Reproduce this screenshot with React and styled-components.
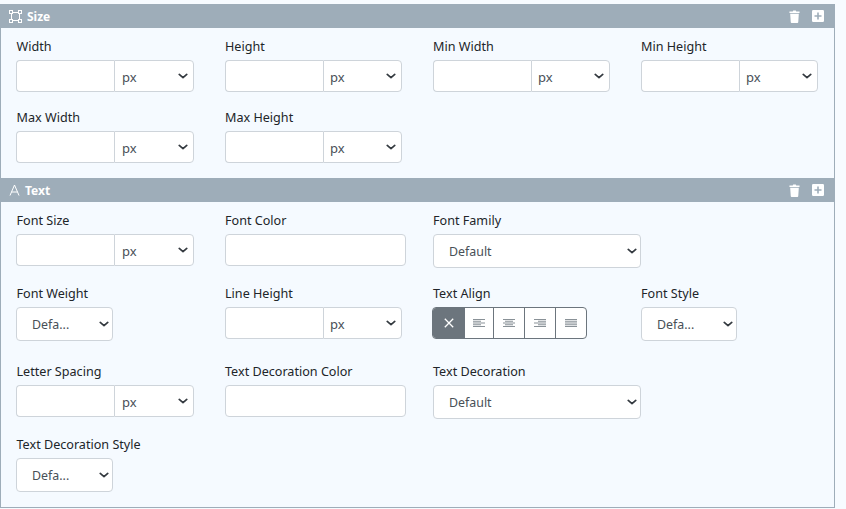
import React from "react";
import styled, { createGlobalStyle } from "styled-components";

const chevron =
	"data:image/svg+xml,%3csvg xmlns='http://www.w3.org/2000/svg' viewBox='0 0 16 16'%3e%3cpath fill='none' stroke='%23343a40' stroke-linecap='round' stroke-linejoin='round' stroke-width='2.8' d='M2 5.500l6 5 6-5'/%3e%3c/svg%3e";

const SizeIcon = () => (
	<svg width="13" height="13" viewBox="0 0 13 13" fill="none" stroke="#fff">
		<path d="M2.500 2.500h8v8h-8z" strokeWidth="1" />
		<g fill="#9eadb9" strokeWidth="1">
			<rect x="0.500" y="0.500" width="3" height="3" />
			<rect x="9.500" y="0.500" width="3" height="3" />
			<rect x="0.500" y="9.500" width="3" height="3" />
			<rect x="9.500" y="9.500" width="3" height="3" />
		</g>
	</svg>
);

const LetterIcon = () => (
	<svg width="11" height="12" viewBox="0 0 11 12" fill="none" stroke="#fff" strokeWidth="1">
		<path d="M1 11.500L5.500 1 10 11.500M2.600 8h5.800" />
	</svg>
);

const TrashIcon = () => (
	<svg width="11" height="13" viewBox="0 0 12 13" fill="#fff" preserveAspectRatio="none">
		<path d="M0.500 1.600h3.600L4.600 .6h2.800l.5 1h3.600v1.400H.5z" />
		<path d="M1.300 3.800h9.400l-.6 8.200c0 .5-.4 .9-.9 .9H2.800c-.5 0-.9-.4-.9-.9z" />
	</svg>
);

const PlusIcon = () => (
	<svg width="12" height="12" viewBox="0 0 12 12">
		<rect x="0" y="0" width="12" height="12" rx="1.200" fill="#fff" />
		<path d="M6 2.500v7M2.500 6h7" stroke="#9eadb9" strokeWidth="1.600" />
	</svg>
);

const AlignIcon = ({ rows }) => (
	<svg width="12" height="8" viewBox="0 0 12 8" stroke="#6c757d" strokeWidth="1" strokeOpacity="0.8">
		{rows.map(([x1, x2], i) => (
			<path key={i} d={`M${x1} ${0.5 + i * 1.75}H${x2}`} />
		))}
	</svg>
);

const CrossIcon = () => (
	<svg width="10" height="10" viewBox="0 0 10 10" stroke="#fff" strokeWidth="1.300">
		<path d="M.8 .8l8.400 8.400M9.200 .8L.8 9.200" />
	</svg>
);

const UnitField = ({ label }) => (
	<Field>
		<Label>{label}</Label>
		<UnitGroup>
			<UnitInput />
			<UnitSelect defaultValue="px">
				<option>px</option>
			</UnitSelect>
		</UnitGroup>
	</Field>
);

const TextField = ({ label }) => (
	<Field>
		<Label>{label}</Label>
		<WideInput />
	</Field>
);

const PickField = ({ label, width = 97, text }) => (
	<Field>
		<Label>{label}</Label>
		<Pick $width={width}>
			<option>{text}</option>
		</Pick>
	</Field>
);

const alignRows = {
	left: [[0, 12], [0, 8], [0, 12], [0, 8], [0, 12]],
	center: [[0, 12], [2, 10], [0, 12], [2, 10], [0, 12]],
	right: [[0, 12], [4, 12], [0, 12], [4, 12], [0, 12]],
	justify: [[0, 12], [0, 12], [0, 12], [0, 12], [0, 12]],
};

const App = () => {
	return (
		<Page>
			<GlobalStyle />
			<Panel>
				<Header>
					<Title>
						<SizeIcon />
						<span>Size</span>
					</Title>
					<Actions>
						<TrashIcon />
						<PlusIcon />
					</Actions>
				</Header>
				<Body>
					<Row $after={15}>
						<UnitField label="Width" />
						<UnitField label="Height" />
						<UnitField label="Min Width" />
						<UnitField label="Min Height" />
					</Row>
					<Row $after={15}>
						<UnitField label="Max Width" />
						<UnitField label="Max Height" />
					</Row>
				</Body>
				<Header>
					<Title>
						<LetterIcon />
						<span>Text</span>
					</Title>
					<Actions>
						<TrashIcon />
						<PlusIcon />
					</Actions>
				</Header>
				<Body>
					<Row $after={15}>
						<UnitField label="Font Size" />
						<TextField label="Font Color" />
						<PickField label="Font Family" width={208} text="Default" />
					</Row>
					<Row $after={20}>
						<PickField label="Font Weight" text="Defa..." />
						<UnitField label="Line Height" />
						<Field>
							<Label>Text Align</Label>
							<AlignGroup>
								<AlignButton $active $width={31}>
									<CrossIcon />
								</AlignButton>
								<AlignButton $width={29}>
									<AlignIcon rows={alignRows.left} />
								</AlignButton>
								<AlignButton $width={31}>
									<AlignIcon rows={alignRows.center} />
								</AlignButton>
								<AlignButton $width={31}>
									<AlignIcon rows={alignRows.right} />
								</AlignButton>
								<AlignButton $width={31}>
									<AlignIcon rows={alignRows.justify} />
								</AlignButton>
							</AlignGroup>
						</Field>
						<PickField label="Font Style" width={96} text="Defa..." />
					</Row>
					<Row $after={15}>
						<UnitField label="Letter Spacing" />
						<TextField label="Text Decoration Color" />
						<PickField label="Text Decoration" width={208} text="Default" />
					</Row>
					<Row $after={15}>
						<PickField label="Text Decoration Style" text="Defa..." />
					</Row>
				</Body>
			</Panel>
		</Page>
	);
};

export default App;

const GlobalStyle = createGlobalStyle`
	html, body {
		margin: 0;
		padding: 0;
		background-color: #f7fbff;
	}
	* {
		box-sizing: border-box;
	}
`;

const Page = styled.div`
	width: 846px;
	height: 509px;
	padding-top: 4px;
	overflow: hidden;
	font-family: "Noto Sans", sans-serif;
`;

const Panel = styled.div`
	width: 835px;
	border: 1px solid #9eadb9;
	border-top: none;
	background-color: #f5faff;
`;

const Header = styled.div`
	height: 24px;
	margin-left: -1px;
	margin-right: -1px;
	background-color: #9eadb9;
	display: flex;
	justify-content: space-between;
	align-items: center;
	padding: 0 11px 0 9px;
`;

const Title = styled.div`
	display: flex;
	align-items: center;
	gap: 5px;
	color: white;
	font-size: 12px;
	font-weight: 700;
`;

const Actions = styled.div`
	display: flex;
	align-items: center;
	gap: 12px;
`;

const Body = styled.div`
	padding: 8px 0 0 15px;
`;

const Row = styled.div`
	display: grid;
	grid-template-columns: 209px 208px 208px 208px;
	margin-bottom: ${(props) => props.$after}px;
`;

const Field = styled.div`
	display: flex;
	flex-direction: column;
	align-items: flex-start;
`;

const Label = styled.label`
	font-size: 12.600px;
	line-height: 20px;
	color: #212529;
	padding-top: 1px;
	margin-bottom: 3px;
	${Field}:first-child > & {
		padding-left: 0.500px;
	}
`;

const UnitGroup = styled.div`
	display: flex;
	width: 177px;
	height: 32px;
	${Field}:first-child > & {
		width: 178px;
	}
`;

const UnitInput = styled.input`
	flex: 0 0 98px;
	width: 98px;
	height: 32px;
	border: 1px solid #ced4da;
	border-right: none;
	border-radius: 4px 0 0 4px;
	background-color: #fff;
	outline: none;
`;

const UnitSelect = styled.select`
	appearance: none;
	flex: 1 1 auto;
	min-width: 0;
	height: 32px;
	border: 1px solid #ced4da;
	border-radius: 0 4px 4px 0;
	padding: 2px 0 0 6px;
	font-family: inherit;
	font-size: 13px;
	color: #495057;
	background: #fff url("${chevron}") no-repeat right 5px center / 10px 10px;
	outline: none;
	${Field}:first-child > * > & {
		padding-left: 7px;
	}
`;

const WideInput = styled.input`
	width: 181px;
	height: 32px;
	border: 1px solid #ced4da;
	border-radius: 4px;
	background-color: #fff;
	outline: none;
`;

const Pick = styled.select`
	appearance: none;
	width: ${(props) => props.$width}px;
	height: 34px;
	border: 1px solid #ced4da;
	border-radius: 4px;
	padding: 0 0 0 15px;
	font-family: inherit;
	font-size: 12.400px;
	color: #495057;
	background: #fff url("${chevron}") no-repeat right 3px center / 10px 10px;
	outline: none;
`;

const AlignGroup = styled.div`
	display: flex;
	width: 155px;
	height: 32px;
	margin-left: -1px;
	border: 1px solid #6c757d;
	border-radius: 4px;
	overflow: hidden;
	background-color: #fff;
`;

const AlignButton = styled.div`
	flex: 0 0 ${(props) => props.$width}px;
	display: flex;
	align-items: center;
	justify-content: center;
	background-color: ${(props) => (props.$active ? "#6c757d" : "transparent")};
	& + & {
		border-left: 1px solid #6c757d;
	}
`;
